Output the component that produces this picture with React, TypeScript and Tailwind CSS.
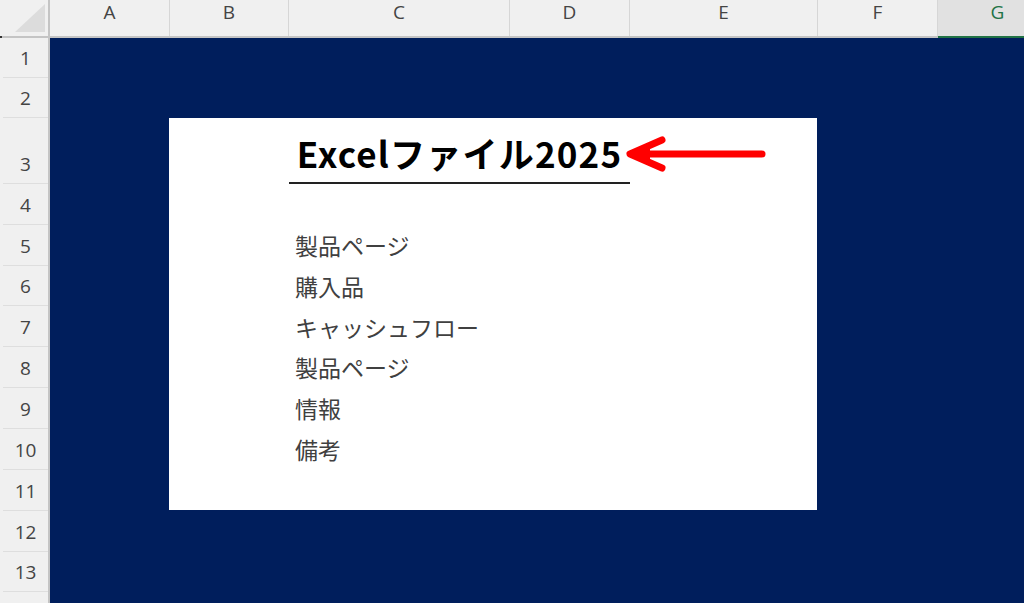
import React from 'react';

const columns = [
  { label: 'A', width: 120 },
  { label: 'B', width: 119 },
  { label: 'C', width: 221 },
  { label: 'D', width: 120 },
  { label: 'E', width: 188 },
  { label: 'F', width: 120 },
  { label: 'G', width: 120, selected: true },
];

const rowHeights = [40, 40, 66, 41, 41, 40, 41, 41, 41, 41, 41, 41, 40, 40];

const items = ['製品ページ', '購入品', 'キャッシュフロー', '製品ページ', '情報', '備考'];
const itemRowHeights = [41, 41, 40, 41, 41, 41];

const uiFont = { fontFamily: '"Open Sans", "Noto Sans", sans-serif' };
const jpFont = { fontFamily: '"Noto Sans CJK JP", sans-serif' };

export default function App() {
  return (
    <div className="relative w-[1024px] h-[603px] overflow-hidden bg-white" style={uiFont}>
      {/* column headers */}
      <div className="flex h-[38px] bg-[#f0f0f0] border-b-2 border-[#c4c4c4]">
        <div className="relative w-[50px] shrink-0 border-r-2 border-[#c4c4c4]">
          <svg className="absolute left-0 top-0" width="48" height="36" viewBox="0 0 48 36">
            <polygon points="45,4 45,32 15,32" fill="#dcdcdc" />
          </svg>
        </div>
        {columns.map((c) => (
          <div
            key={c.label}
            className={`shrink-0 flex justify-center pt-[1px] text-[19px] leading-[22px] border-r border-[#d6d6d6] ${
              c.selected ? 'bg-[#e1e1e1] text-[#217346] border-b-2 border-b-[#217346] -mb-[2px]' : 'text-[#444444]'
            }`}
            style={{ width: c.width }}
          >
            {c.label}
          </div>
        ))}
      </div>

      <div className="flex">
        {/* row headers */}
        <div className="w-[50px] shrink-0 bg-[#f0f0f0] border-r-2 border-[#c4c4c4]">
          {rowHeights.map((h, i) => (
            <div
              key={i}
              className="flex items-end justify-center pb-[9px] text-[19px] leading-[20px] text-[#444444] border-b border-[#dedede] ml-[3px]"
              style={{ height: h }}
            >
              {i < 13 ? i + 1 : ''}
            </div>
          ))}
        </div>

        {/* sheet area */}
        <div className="flex-1 h-[600px] bg-[#001e5c] pl-[119px] pt-[80px]">
          <div className="w-[648px] h-[392px] bg-white flex flex-col">
            <div className="flex h-[66px]">
              <div className="w-[120px] shrink-0" />
              <div
                className="w-[341px] shrink-0 flex items-end justify-center pb-[6px] border-b-2 border-[#222222] text-[35px] leading-[46px] font-bold tracking-[1.2px] text-black"
                style={jpFont}
              >
                Excelファイル2025
              </div>
            </div>
            <div className="h-[41px]" />
            {items.map((t, i) => (
              <div
                key={i}
                className="flex items-center pl-[126px] text-[23px] text-[#404040]"
                style={{ ...jpFont, height: itemRowHeights[i] }}
              >
                {t}
              </div>
            ))}
          </div>
        </div>
      </div>

      <div className="absolute left-0 top-[36px] w-[2px] h-[2px] bg-[#333333]" />

      {/* red arrow */}
      <svg className="absolute left-[620px] top-[130px]" width="150" height="48" viewBox="0 0 150 48">
        <line x1="14" y1="24" x2="142" y2="24" stroke="#ff0000" strokeWidth="7" strokeLinecap="round" />
        <polyline
          points="42,10 10,24 42,38"
          fill="none"
          stroke="#ff0000"
          strokeWidth="7"
          strokeLinecap="round"
          strokeLinejoin="round"
        />
        <polygon points="9,24 30,15 30,33" fill="#ff0000" />
      </svg>
    </div>
  );
}
